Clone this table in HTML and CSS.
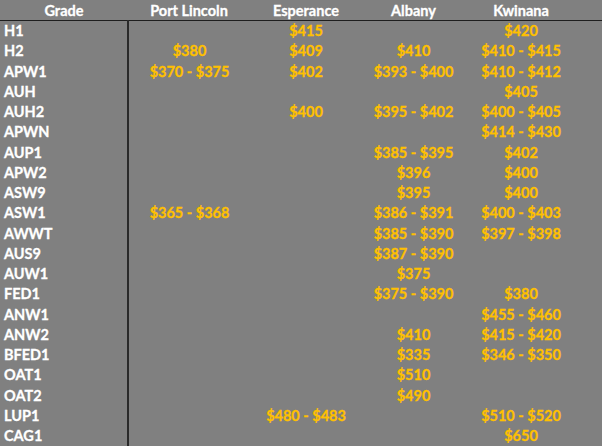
FILE: index.html
```html
<!DOCTYPE html>
<html>
<head>
<meta charset="utf-8">
<link rel="stylesheet" href="styles.css">
</head>
<body>
<table class="grid">
<colgroup><col class="c0"><col class="c1"><col class="c2"><col class="c3"><col class="c4"><col class="c5"></colgroup>
<thead>
<tr><th>Grade</th><th>Port Lincoln</th><th>Esperance</th><th>Albany</th><th>Kwinana</th><th></th></tr>
</thead>
<tbody>
<tr><td class="g">H1</td><td></td><td>$415</td><td></td><td>$420</td><td></td></tr>
<tr><td class="g">H2</td><td>$380</td><td>$409</td><td>$410</td><td>$410 - $415</td><td></td></tr>
<tr><td class="g">APW1</td><td>$370 - $375</td><td>$402</td><td>$393 - $400</td><td>$410 - $412</td><td></td></tr>
<tr><td class="g">AUH</td><td></td><td></td><td></td><td>$405</td><td></td></tr>
<tr><td class="g">AUH2</td><td></td><td>$400</td><td>$395 - $402</td><td>$400 - $405</td><td></td></tr>
<tr><td class="g">APWN</td><td></td><td></td><td></td><td>$414 - $430</td><td></td></tr>
<tr><td class="g">AUP1</td><td></td><td></td><td>$385 - $395</td><td>$402</td><td></td></tr>
<tr><td class="g">APW2</td><td></td><td></td><td>$396</td><td>$400</td><td></td></tr>
<tr><td class="g">ASW9</td><td></td><td></td><td>$395</td><td>$400</td><td></td></tr>
<tr><td class="g">ASW1</td><td>$365 - $368</td><td></td><td>$386 - $391</td><td>$400 - $403</td><td></td></tr>
<tr><td class="g">AWWT</td><td></td><td></td><td>$385 - $390</td><td>$397 - $398</td><td></td></tr>
<tr><td class="g">AUS9</td><td></td><td></td><td>$387 - $390</td><td></td><td></td></tr>
<tr><td class="g">AUW1</td><td></td><td></td><td>$375</td><td></td><td></td></tr>
<tr><td class="g">FED1</td><td></td><td></td><td>$375 - $390</td><td>$380</td><td></td></tr>
<tr><td class="g">ANW1</td><td></td><td></td><td></td><td>$455 - $460</td><td></td></tr>
<tr><td class="g">ANW2</td><td></td><td></td><td>$410</td><td>$415 - $420</td><td></td></tr>
<tr><td class="g">BFED1</td><td></td><td></td><td>$335</td><td>$346 - $350</td><td></td></tr>
<tr><td class="g">OAT1</td><td></td><td></td><td>$510</td><td></td><td></td></tr>
<tr><td class="g">OAT2</td><td></td><td></td><td>$490</td><td></td><td></td></tr>
<tr><td class="g">LUP1</td><td></td><td>$480 - $483</td><td></td><td>$510 - $520</td><td></td></tr>
<tr><td class="g">CAG1</td><td></td><td></td><td></td><td>$650</td><td></td></tr>
</tbody>
</table>
</body>
</html>
```
FILE: styles.css
```css
html, body {
  margin: 0;
  padding: 0;
  background: #808080;
  width: 602px;
  height: 446px;
  overflow: hidden;
}
.grid {
  border-collapse: collapse;
  table-layout: fixed;
  width: 602px;
  font-family: "Lato", "Open Sans", sans-serif;
  font-weight: 700;
  font-size: 14.5px;
  -webkit-text-stroke: 0.3px currentColor;
}
.c0 { width: 128px; }
.c1 { width: 122px; }
.c2 { width: 112px; }
.c3 { width: 103px; }
.c4 { width: 112px; }
.c5 { width: 25px; }
.grid th {
  height: 20px;
  padding: 0;
  color: #ffffff;
  text-align: center;
  border-bottom: 1.5px solid #1e1e1e;
  white-space: nowrap;
}
.grid td {
  height: 20.25px;
  padding: 0;
  color: #ffc000;
  text-align: center;
  white-space: nowrap;
  line-height: 20px;
}
.grid td.g {
  color: #ffffff;
  text-align: left;
  padding-left: 4px;
  border-right: 2px solid #2a2a2a;
}
```
